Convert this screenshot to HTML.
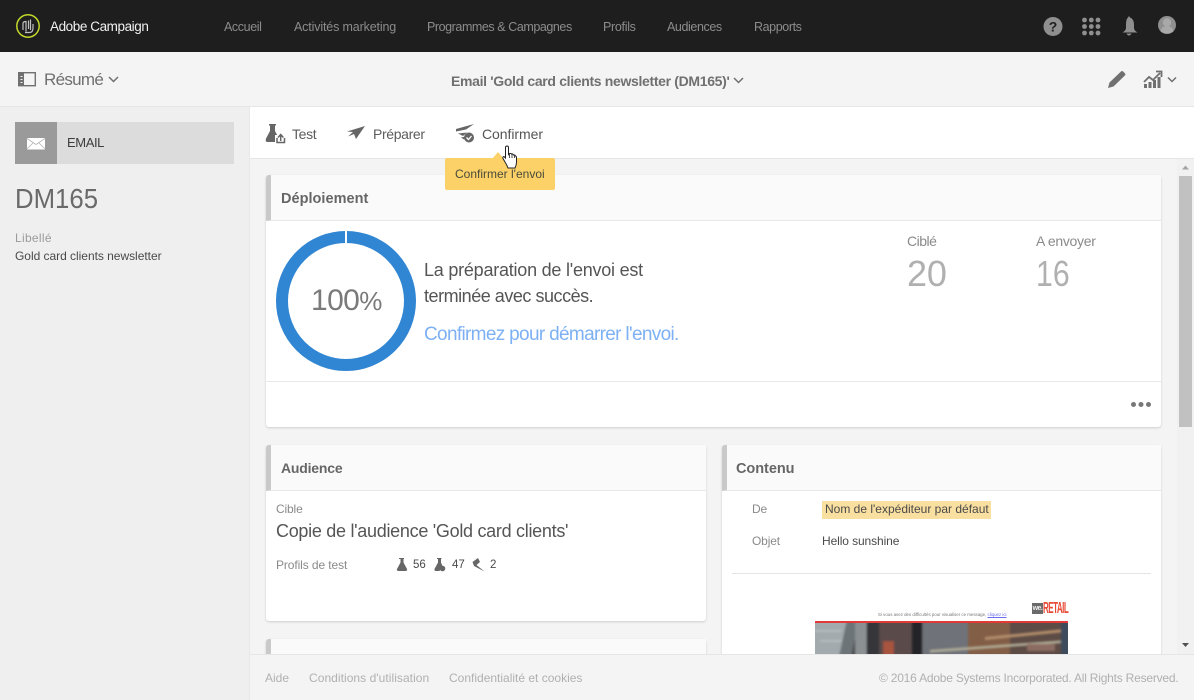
<!DOCTYPE html>
<html lang="fr"><head><meta charset="utf-8"><title>Adobe Campaign</title>
<style>
*{box-sizing:border-box}
html,body{margin:0;padding:0;width:1194px;height:700px;overflow:hidden;background:#f4f4f4;font-family:"Liberation Sans",sans-serif}
.a{position:absolute}
.t{position:absolute;white-space:nowrap;line-height:20px;height:20px}
.nav{top:17px;font-size:12.5px;color:#8c8c8c;letter-spacing:-.3px}
.tb{top:124px;font-size:14px;color:#5c5c5c;letter-spacing:-.35px}
.card{position:absolute;background:#fff;border-radius:3px;box-shadow:0 1px 2px rgba(0,0,0,.16)}
.hd{position:absolute;left:0;right:0;top:0;height:46px;background:#fafafa;border-bottom:1px solid #e8e8e8;border-left:5px solid #c9c9c9;border-radius:3px 0 0 0}
.h{font-size:14px;font-weight:bold;color:#666;letter-spacing:-.2px}
.lb{font-size:12px;color:#8a8a8a;letter-spacing:-.15px}
.v{font-size:12px;color:#4a4a4a;letter-spacing:-.2px}
.f{top:668px;font-size:12px;color:#b0b0b0;letter-spacing:0}
svg{position:absolute;overflow:visible}
</style></head><body>

<!-- top bar -->
<div class="a" style="left:0;top:0;width:1194px;height:52px;background:#1e1e1e"></div>
<svg style="left:0;top:0" width="60" height="52" fill="none">
<circle cx="28" cy="26" r="11.2" stroke="#c3d82a" stroke-width="1.5"/>
<path d="M30.500 19.500V30M28.500 20.500V29M23 30V23.500Q23 21.500 26 21.500V31.500M25 32.500H29.500Q33 32.500 33 28V24" stroke="#c0c0c0" stroke-width="1.200"/>
</svg>
<div class="t" style="left:50px;top:17px;font-size:13.5px;color:#f0f0f0;letter-spacing:-.42px">Adobe Campaign</div>
<div class="t nav" style="left:224px;letter-spacing:-.4px">Accueil</div>
<div class="t nav" style="left:294px;letter-spacing:-.15px">Activités marketing</div>
<div class="t nav" style="left:427px;letter-spacing:-.43px">Programmes &amp; Campagnes</div>
<div class="t nav" style="left:603px">Profils</div>
<div class="t nav" style="left:667px;letter-spacing:-.4px">Audiences</div>
<div class="t nav" style="left:754px;letter-spacing:-.4px">Rapports</div>
<svg style="left:1040px;top:14px" width="150" height="26">
<circle cx="13" cy="12.500" r="9.500" fill="#8f8f8f"/>
<text x="13" y="17.500" font-family="Liberation Sans" font-size="14" font-weight="bold" fill="#1e1e1e" text-anchor="middle">?</text>
<g fill="#8f8f8f"><circle cx="44.500" cy="6" r="2.400"/><circle cx="51.300" cy="6" r="2.400"/><circle cx="58" cy="6" r="2.400"/><circle cx="44.500" cy="12.500" r="2.400"/><circle cx="51.300" cy="12.500" r="2.400"/><circle cx="58" cy="12.500" r="2.400"/><circle cx="44.500" cy="19" r="2.400"/><circle cx="51.300" cy="19" r="2.400"/><circle cx="58" cy="19" r="2.400"/>
<path d="M88 3.500q1-2.500 2 0 4 1.500 4 7v3.500q0 2.500 3.500 4.500h-15q3.500-2 3.500-4.500v-3.500q0-5.500 2-7z"/><path d="M86.500 19.500h5q-1 2-2.500 2t-2.500-2z"/>
<circle cx="127" cy="11" r="9" fill="#8f8f8f"/></g>
<circle cx="127" cy="8.500" r="4.200" fill="#a8a8a8"/><path d="M120.500 17.500q1-5.500 6.500-5.500t6.500 5.500q-6.500 4-13 0z" fill="#a8a8a8"/>
</svg>

<!-- sub header -->
<div class="a" style="left:0;top:52px;width:1194px;height:55px;background:#f4f4f4;border-bottom:1px solid #e6e6e6"></div>
<svg style="left:18px;top:71px" width="18" height="16" fill="none">
<rect x=".7" y="1.700" width="16.600" height="13" stroke="#707070" stroke-width="1.400"/>
<rect x="1" y="2" width="5" height="12.500" fill="#707070"/>
<path d="M2.500 5.500h2M2.500 8.500h2M2.500 11.500h2" stroke="#f4f4f4"/>
</svg>
<div class="t" style="left:44px;top:70px;font-size:17px;color:#707070;letter-spacing:-.7px">Résumé</div>
<svg style="left:108px;top:76px" width="12" height="8" fill="none"><path d="M1 1l4.500 4.500L10 1" stroke="#707070" stroke-width="1.500"/></svg>
<div class="t" style="left:451px;top:71px;font-size:14px;font-weight:bold;color:#707070;letter-spacing:-.33px">Email 'Gold card clients newsletter (DM165)'</div>
<svg style="left:733px;top:77px" width="12" height="8" fill="none"><path d="M1 1l4.500 4.500L10 1" stroke="#707070" stroke-width="1.500"/></svg>
<svg style="left:1106px;top:68px" width="90" height="24">
<path d="M2 20l1.500-5.500L15 3.500q1-1 2-.1l2 2q.9 1 0 2L7.500 18.500z" fill="#707070"/>
<path d="M38 20v-4h3v4zM42.500 20v-6h3v6zM47 20v-8h3v8zM51.500 20V9h3v11z" fill="#707070"/>
<path d="M38 14l5-5 4 3 7-7M50 3.500h5.500V9" fill="none" stroke="#707070" stroke-width="1.800"/>
<path d="M62 9.500l4 4 4-4" fill="none" stroke="#707070" stroke-width="1.500"/>
</svg>

<!-- sidebar -->
<div class="a" style="left:0;top:107px;width:250px;height:593px;background:#efefef;border-right:1px solid #e8e8e8"></div>
<div class="a" style="left:15px;top:122px;width:219px;height:42px;background:#dcdcdc"></div>
<div class="a" style="left:15px;top:122px;width:42px;height:42px;background:#9a9a9a"></div>
<svg style="left:27px;top:138px" width="18" height="12"><rect width="18" height="11.500" fill="#fff"/><path d="M0 .5l9 6 9-6M0 11l6-6M18 11l-6-6" fill="none" stroke="#b5b5b5" stroke-width=".8"/></svg>
<div class="t" style="left:67px;top:133px;font-size:13px;color:#3d3d3d;letter-spacing:-.4px">EMAIL</div>
<div class="t" style="left:15px;top:184px;height:30px;line-height:30px;font-size:28px;color:#6a6a6a;transform-origin:0 50%;transform:scaleX(.92)">DM165</div>
<div class="t lb" style="left:15px;top:228px;color:#9b9b9b;letter-spacing:.3px">Libellé</div>
<div class="t v" style="left:15px;top:246px;letter-spacing:-.03px">Gold card clients newsletter</div>

<!-- main background + toolbar -->
<div class="a" style="left:250px;top:107px;width:944px;height:52px;background:#fff;border-bottom:1px solid #e6e6e6"></div>
<svg style="left:265px;top:122px" width="290" height="24">
<g fill="#666">
<path d="M4 2h7v1.500h-1V9l4 7.500q1 3-1.500 3.500H2.500Q0 20 1 16.500L5 9V3.500H4z"/>
<path d="M82 9.500L100 4l-9 13-2-5-6 2.500 5-4.500z"/>
<path d="M191 7l18-5-8 5.500-10 2zM193 11.500l9-1-4 3.500zM196 15.500l5-1-2 3z"/>
</g>
<rect x="10" y="13" width="11" height="9" fill="#fff"/>
<path d="M12 16v4.500h7.500V16M15.700 19v-6M13 15.500l2.700-3 2.700 3" fill="none" stroke="#666" stroke-width="1.500"/>
<circle cx="204" cy="15.500" r="5" fill="#666"/><path d="M201.500 15.500l2 2 3-3.500" fill="none" stroke="#fff" stroke-width="1.300"/>
</svg>
<div class="t tb" style="left:292px">Test</div>
<div class="t tb" style="left:373px">Préparer</div>
<div class="t tb" style="left:482px;color:#555;letter-spacing:-.05px">Confirmer</div>

<!-- cards -->
<div class="a" style="left:250px;top:159px;width:944px;height:495px;background:#f4f4f4;overflow:hidden">
 <div class="card" style="left:16px;top:16px;width:895px;height:252px">
  <div class="hd"></div>
  <div class="a" style="left:0;right:0;top:206px;height:1px;background:#e8e8e8"></div>
  <svg style="left:0;top:0" width="150" height="210" fill="none">
   <circle cx="80" cy="126" r="64" stroke="#3186d3" stroke-width="12"/>
   <rect x="79" y="55" width="2" height="14" fill="#fff"/>
  </svg>
 </div>
 <div class="card" style="left:16px;top:286px;width:440px;height:176px"><div class="hd"></div></div>
 <div class="card" style="left:16px;top:480px;width:440px;height:60px"><div class="hd"></div></div>
 <div class="card" style="left:472px;top:286px;width:439px;height:260px"><div class="hd"></div>
  <div class="a" style="left:10px;right:10px;top:128px;height:1px;background:#e4e4e4"></div>
 </div>
 <div class="a" style="left:565px;top:462px;width:253px;height:33px;overflow:hidden;background:#4f4e52">
  <svg style="left:0;top:2px;filter:blur(1px)" width="253" height="31">
   <rect x="-3" y="-3" width="260" height="38" fill="#4f4e52"/>
   <rect x="-3" y="-3" width="37" height="38" fill="#a3aaad"/>
   <path d="M32-3H44L36 34H24z" fill="#6c7478"/>
   <rect x="40" y="-3" width="12" height="38" fill="#8b9092"/>
   <rect x="52" y="-3" width="12" height="38" fill="#35353a"/>
   <rect x="64" y="-3" width="33" height="38" fill="#5a4a4a"/>
   <rect x="68" y="18" width="11" height="16" fill="#a9543f"/>
   <rect x="97" y="-3" width="10" height="38" fill="#232428"/>
   <rect x="107" y="-3" width="46" height="38" fill="#6f7279"/>
   <rect x="153" y="-3" width="42" height="38" fill="#835e47"/>
   <rect x="195" y="-3" width="58" height="38" fill="#5d4b45"/>
   <path d="M115 27L253 17v2.500L115 29.500z" fill="#b4b09a"/><path d="M170 14l80-8v3l-80 8z" fill="#b38f6c"/>
   <rect x="212" y="21" width="28" height="7" fill="#8c6c62"/><rect x="246" y="-3" width="10" height="38" fill="#3e4b5c"/>
   <path d="M0 8h26M5 18h22" stroke="#c7ced0"/>
  </svg>
  <div class="a" style="left:0;top:0;width:253px;height:2px;background:#e23a36"></div>
 </div>
</div>

<div class="t h" style="left:281px;top:189px;font-size:14.500px;letter-spacing:.03px">Déploiement</div>
<div class="t" style="left:311px;top:285px;height:32px;line-height:32px;font-size:30px;color:#7a7a7a;letter-spacing:-.6px">100<span style="font-size:26px">%</span></div>
<div class="t" style="left:424px;top:260px;font-size:18px;color:#555;letter-spacing:-.23px">La préparation de l'envoi est</div>
<div class="t" style="left:424px;top:286px;font-size:18px;color:#555;letter-spacing:-.47px">terminée avec succès.</div>
<div class="t" style="left:424px;top:325px;font-size:19px;color:#7db1f4;letter-spacing:-.67px">Confirmez pour démarrer l'envoi.</div>
<div class="t" style="left:907px;top:231px;font-size:14px;color:#8a8a8a;letter-spacing:-.5px">Ciblé</div>
<div class="t" style="left:1036px;top:231px;font-size:14px;color:#8a8a8a;letter-spacing:-.3px">A envoyer</div>
<div class="t" style="left:907px;top:254px;height:40px;line-height:40px;font-size:36px;color:#b0b0b0;letter-spacing:-.2px">20</div>
<div class="t" style="left:1036px;top:254px;height:40px;line-height:40px;font-size:36px;color:#b0b0b0;transform-origin:0 50%;transform:scaleX(.84)">16</div>
<svg style="left:1130px;top:400px" width="24" height="10" fill="#777"><circle cx="3.500" cy="4.500" r="2.500"/><circle cx="11" cy="4.500" r="2.500"/><circle cx="18.500" cy="4.500" r="2.500"/></svg>

<div class="t h" style="left:281px;top:458px">Audience</div>
<div class="t lb" style="left:276px;top:499px">Cible</div>
<div class="t" style="left:276px;top:521px;font-size:18px;color:#555;letter-spacing:-.29px">Copie de l'audience 'Gold card clients'</div>
<div class="t lb" style="left:276px;top:555px;letter-spacing:-.1px">Profils de test</div>
<svg style="left:396px;top:558px" width="105" height="14" fill="#666">
<path d="M3 0h5v1H7.500v3.500L11 11q.5 2-1.500 2h-7Q.5 13 1 11l3.500-6.500V1H3z"/>
<path d="M41 0h4.500v1H45v3.500l1.500 3.500-3 5h-3.500Q38 13 38.500 11L42 4.500V1h-1z"/><circle cx="46.500" cy="10.500" r="2.800"/>
<path d="M76.500 4L82 0l2 4-3.500 3 8 6.500L78 8z"/>
</svg>
<div class="t v" style="left:413px;top:555px;font-size:11.500px;letter-spacing:0">56</div>
<div class="t v" style="left:452px;top:555px;font-size:11.500px;letter-spacing:0">47</div>
<div class="t v" style="left:490px;top:555px;font-size:11.500px;letter-spacing:0">2</div>

<div class="t h" style="left:736px;top:459px;font-size:14.500px;letter-spacing:-.05px">Contenu</div>
<div class="t lb" style="left:752px;top:499px">De</div>
<div class="a" style="left:822px;top:501px;width:169px;height:18px;background:#f9dfa0"></div>
<div class="t v" style="left:825px;top:499px;letter-spacing:0">Nom de l'expéditeur par défaut</div>
<div class="t lb" style="left:752px;top:531px">Objet</div>
<div class="t v" style="left:822px;top:531px;letter-spacing:-.1px">Hello sunshine</div>
<div class="t" style="left:878px;top:605px;font-size:4.400px;color:#777;filter:blur(.3px)">Si vous avez des difficultés pour visualiser ce message, <span style="color:#6b6bf0;text-decoration:underline">cliquez ici</span></div>
<div class="a" style="left:1032px;top:603px;width:11px;height:11px;background:#6a6a6a;color:#eee;font-size:7px;line-height:11px;text-align:center;font-weight:bold;letter-spacing:-.5px">we.</div>
<div class="t" style="left:1043px;top:599px;font-size:16px;font-weight:bold;color:#e84a35;letter-spacing:-1px;transform-origin:0 50%;transform:scaleX(.5);width:50px">RETAIL</div>

<!-- scrollbar -->
<div class="a" style="left:1177px;top:159px;width:17px;height:495px;background:#f1f1f1"></div>
<div class="a" style="left:1179px;top:176px;width:13px;height:251px;background:#c1c1c1"></div>
<svg style="left:1181px;top:164px" width="10" height="6"><path d="M1 5.500L4.500 1.500 8 5.500z" fill="#a3a3a3"/></svg>
<svg style="left:1181px;top:642px" width="10" height="6"><path d="M1 1h7L4.500 5z" fill="#505050"/></svg>

<!-- footer -->
<div class="a" style="left:250px;top:654px;width:944px;height:46px;background:#f4f4f4;border-top:1px solid #e6e6e6"></div>
<div class="t f" style="left:265px;letter-spacing:0">Aide</div>
<div class="t f" style="left:309px;letter-spacing:.05px">Conditions d'utilisation</div>
<div class="t f" style="left:449px">Confidentialité et cookies</div>
<div class="t f" style="left:879px;letter-spacing:-.21px">© 2016 Adobe Systems Incorporated. All Rights Reserved.</div>

<!-- tooltip -->
<div class="a" style="left:445px;top:158px;width:110px;height:32px;background:#fbd168;border-radius:2px"></div>
<svg style="left:490px;top:152px" width="16" height="8"><path d="M2 7L8 0l6 7z" fill="#fbd168"/></svg>
<div class="t" style="left:455px;top:164px;font-size:12px;color:#4a4a3a;letter-spacing:0">Confirmer l'envoi</div>
<svg style="left:502px;top:145px" width="18" height="26"><path d="M3.500 2.500q0-1.500 1.500-1.500t1.500 1.500v7l1-1q1.500-.5 2 .5 1.500-.5 2 1 1.500-.5 2 1 1 0 1 2v4q0 3-1.500 6h-7Q5 20 3 17L1 13.500q-.5-2 1-2l1.500 1.500z" fill="#fff" stroke="#222" stroke-width="1"/><path d="M7.500 9v4M10 9.500v3.500M12.500 10.500V13" stroke="#222" stroke-width=".8"/></svg>
</body></html>
